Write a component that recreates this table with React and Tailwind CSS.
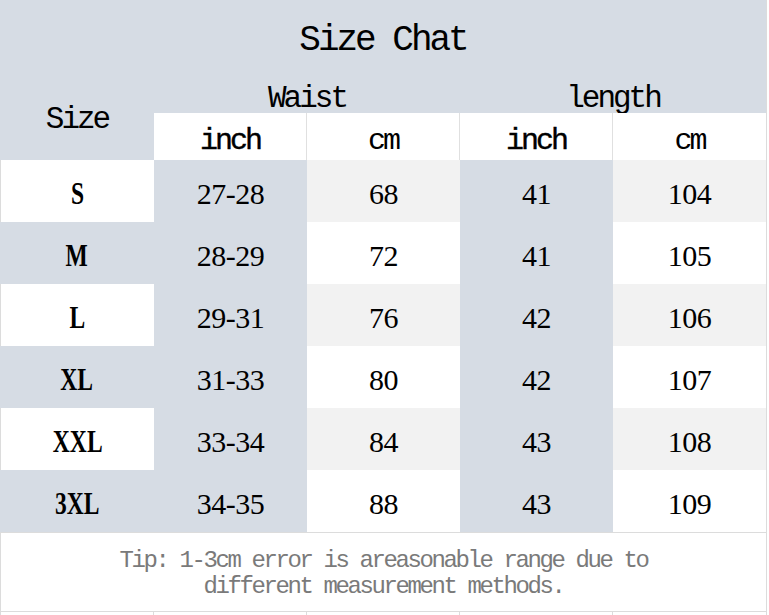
const mono = "font-['Liberation_Mono','DejaVu_Sans_Mono',monospace]";
const serif = "font-['Liberation_Serif','DejaVu_Serif',serif]";

const GRAY = "bg-[#d6dce4]";
const LIGHT = "bg-[#f2f2f2]";
const WHITE = "bg-white";

const rows = [
  { size: "S", waist: "27-28", waistCm: "68", len: "41", lenCm: "104" },
  { size: "M", waist: "28-29", waistCm: "72", len: "41", lenCm: "105" },
  { size: "L", waist: "29-31", waistCm: "76", len: "42", lenCm: "106" },
  { size: "XL", waist: "31-33", waistCm: "80", len: "42", lenCm: "107" },
  { size: "XXL", waist: "33-34", waistCm: "84", len: "43", lenCm: "108" },
  { size: "3XL", waist: "34-35", waistCm: "88", len: "43", lenCm: "109" },
];

function Cell({ bg, className = "", children }) {
  return (
    <div className={`${bg} flex items-center justify-center box-border ${className}`}>
      {children}
    </div>
  );
}

function Value({ children }) {
  return (
    <span className={`${serif} text-[30px] leading-none tracking-[-0.5px] text-black pt-[5px]`}>
      {children}
    </span>
  );
}

export default function App() {
  return (
    <div className="w-[769px] h-[615px] bg-white overflow-hidden">
      <div className="w-[767px] border-r border-[#dcdcdc] box-border grid grid-cols-[154px_153px_153px_153px_153px] grid-rows-[75px_38px_47px_repeat(6,62px)_80px_20px]">
        {/* title */}
        <Cell bg={GRAY} className="col-span-5">
          <span className={`${mono} text-[36px] leading-none tracking-[-3px] text-black pt-[6px]`}>
            Size Chat
          </span>
        </Cell>

        {/* size header */}
        <Cell bg={GRAY} className="row-span-2">
          <span className={`${mono} text-[31px] leading-none tracking-[-3px] text-black pt-[4px]`}>
            Size
          </span>
        </Cell>
        <Cell bg={GRAY} className="col-span-2">
          <span className={`${mono} text-[31px] leading-none tracking-[-3px] text-black pt-[8px]`}>
            Waist
          </span>
        </Cell>
        <Cell bg={GRAY} className="col-span-2">
          <span className={`${mono} text-[31px] leading-none tracking-[-3px] text-black pt-[8px]`}>
            length
          </span>
        </Cell>

        {/* sub headers */}
        {["inch", "cm", "inch", "cm"].map((t, i) => (
          <Cell key={i} bg={WHITE} className={i < 3 ? "border-r border-[#e0e0e0]" : ""}>
            <span
              className={`${mono} text-[30px] leading-none tracking-[-3px] text-black pt-[8px] ${
                t === "inch" ? "[-webkit-text-stroke:0.4px_black]" : ""
              }`}
            >
              {t}
            </span>
          </Cell>
        ))}

        {/* data */}
        {rows.map((r, i) => {
          const odd = i % 2 === 0;
          return [
            <Cell
              key={r.size + "-s"}
              bg={odd ? WHITE : GRAY}
              className={odd ? "border-l border-[#dcdcdc]" : ""}
            >
              <span className={`${serif} inline-block text-[31px] leading-none font-bold text-black scale-x-[0.76] pt-[5px]`}>
                {r.size}
              </span>
            </Cell>,
            <Cell key={r.size + "-w"} bg={GRAY}>
              <Value>{r.waist}</Value>
            </Cell>,
            <Cell key={r.size + "-wc"} bg={odd ? LIGHT : WHITE}>
              <Value>{r.waistCm}</Value>
            </Cell>,
            <Cell key={r.size + "-l"} bg={GRAY}>
              <Value>{r.len}</Value>
            </Cell>,
            <Cell key={r.size + "-lc"} bg={odd ? LIGHT : WHITE}>
              <Value>{r.lenCm}</Value>
            </Cell>,
          ];
        })}

        {/* tip */}
        <Cell bg={WHITE} className="col-span-5 border-t border-b border-l border-[#dcdcdc]">
          <p className={`${mono} text-[24px] leading-[26px] tracking-[-2.4px] text-[#7a7a7a] text-center pt-[4px]`}>
            Tip: 1-3cm error is areasonable range due to
            <br />
            different measurement methods.
          </p>
        </Cell>

        {/* empty sheet row */}
        {[0, 1, 2, 3, 4].map((i) => (
          <div
            key={i}
            className={`bg-white box-border ${i < 4 ? "border-r" : ""} ${i === 0 ? "border-l" : ""} border-[#dcdcdc]`}
          />
        ))}
      </div>
    </div>
  );
}
